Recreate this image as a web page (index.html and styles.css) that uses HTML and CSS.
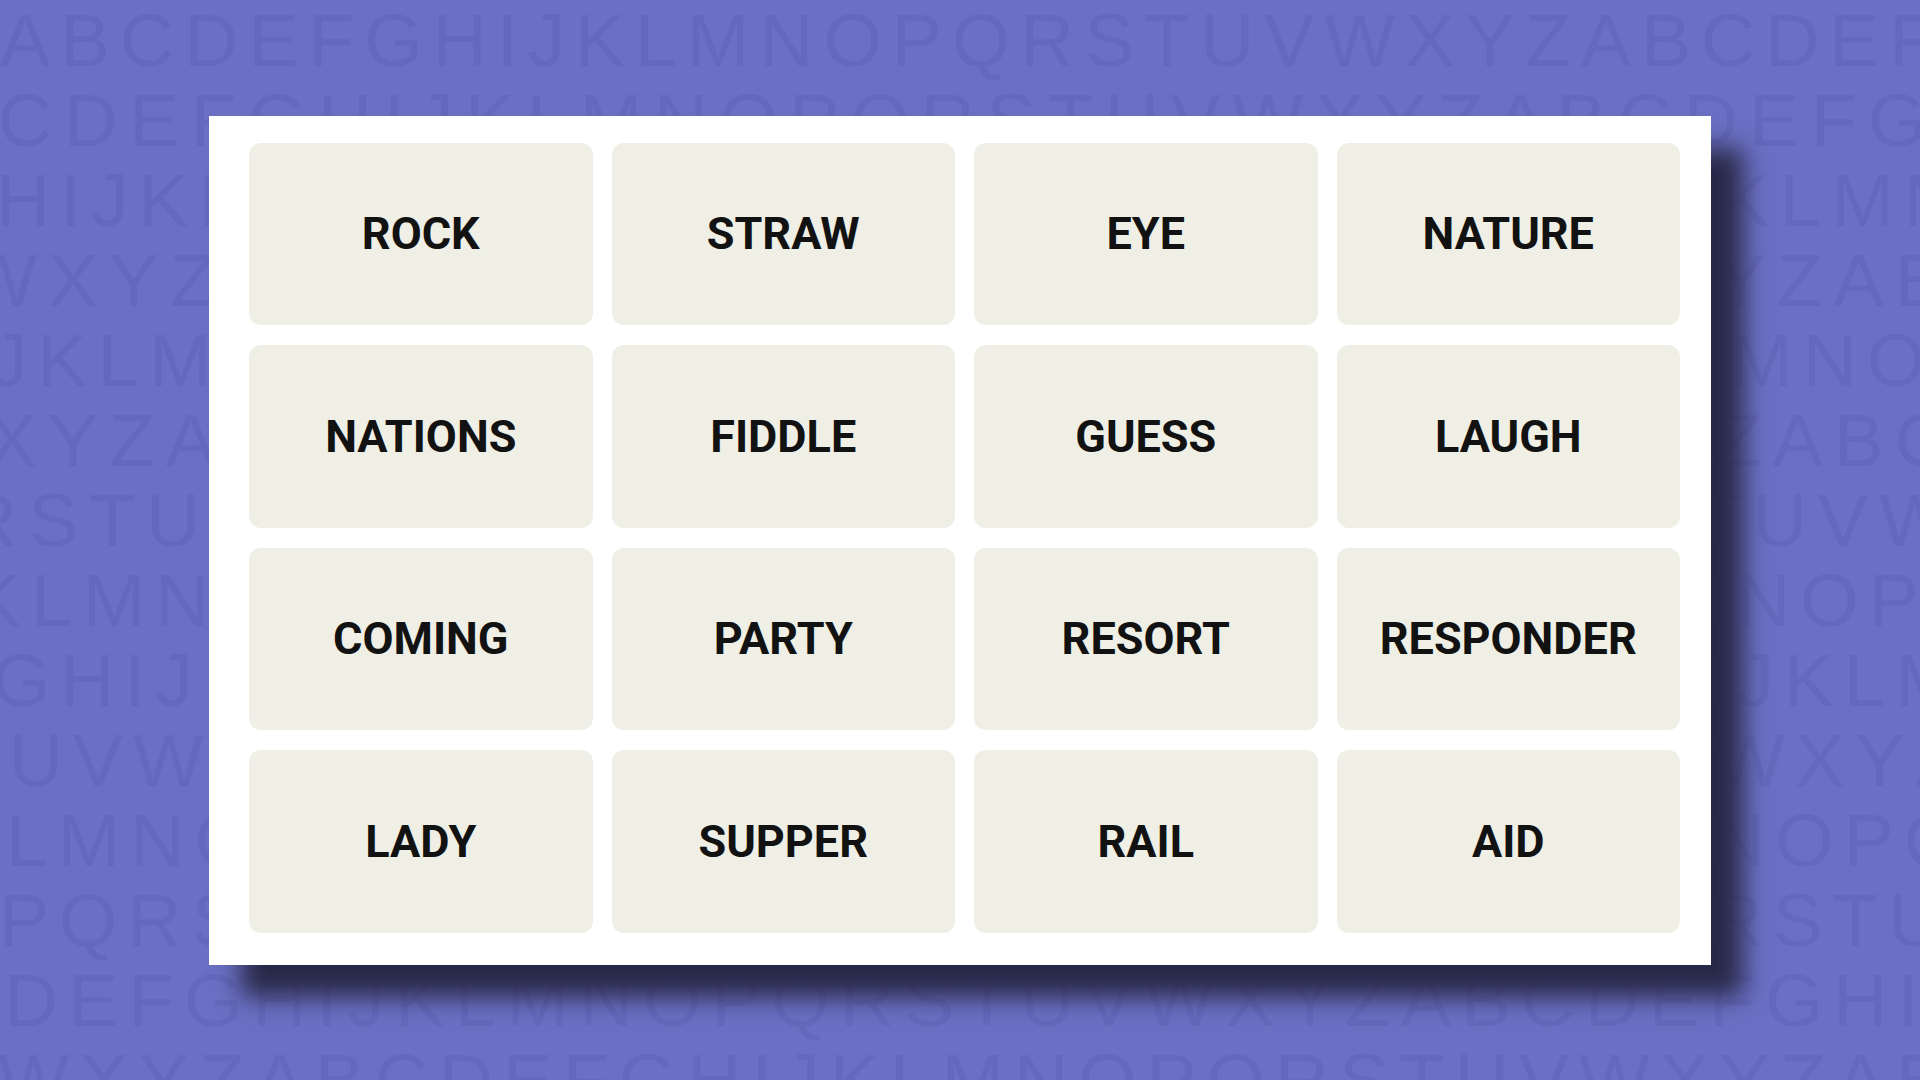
FILE: index.html
```html
<!DOCTYPE html>
<html lang="en">

<head>
    <meta charset="UTF-8">
    <meta name="viewport" content="width=device-width, initial-scale=1.0">
    <title>Connections</title>
    <link rel="stylesheet" href="styles.css">
</head>

<body>
    <div class="scene">
        <!-- alphabet wallpaper behind the board -->
        <div class="letters" aria-hidden="true">
            <div class="row r1">ABCDEFGHIJKLMNOPQRSTUVWXYZABCDEFGHIJ</div>
            <div class="row r2">CDEFGHIJKLMNOPQRSTUVWXYZABCDEFGHIJKL</div>
            <div class="row r3">HIJKLMNOPQRSTUVWXYZABCDEFGHIJKLMNOPQ</div>
            <div class="row r4">WXYZABCDEFGHIJKLMNOPQRSTUVWXYZABCDEF</div>
            <div class="row r5">JKLMNOPQRSTUVWXYZABCDEFGHIJKLMNOPQRS</div>
            <div class="row r6">XYZABCDEFGHIJKLMNOPQRSTUVWXYZABCDEFG</div>
            <div class="row r7">RSTUVWXYZABCDEFGHIJKLMNOPQRSTUVWXYZA</div>
            <div class="row r8">KLMNOPQRSTUVWXYZABCDEFGHIJKLMNOPQRST</div>
            <div class="row r9">GHIJKLMNOPQRSTUVWXYZABCDEFGHIJKLMNOP</div>
            <div class="row r10">TUVWXYZABCDEFGHIJKLMNOPQRSTUVWXYZABC</div>
            <div class="row r11">LMNOPQRSTUVWXYZABCDEFGHIJKLMNOPQRSTU</div>
            <div class="row r12">PQRSTUVWXYZABCDEFGHIJKLMNOPQRSTUVWXY</div>
            <div class="row r13">DEFGHIJKLMNOPQRSTUVWXYZABCDEFGHIJKLM</div>
            <div class="row r14">WXYZABCDEFGHIJKLMNOPQRSTUVWXYZABCDEF</div>
        </div>

        <div class="stage">
            <div class="board">
                <div class="tile">ROCK</div>
                <div class="tile">STRAW</div>
                <div class="tile">EYE</div>
                <div class="tile">NATURE</div>
                <div class="tile">NATIONS</div>
                <div class="tile">FIDDLE</div>
                <div class="tile">GUESS</div>
                <div class="tile">LAUGH</div>
                <div class="tile">COMING</div>
                <div class="tile">PARTY</div>
                <div class="tile">RESORT</div>
                <div class="tile">RESPONDER</div>
                <div class="tile">LADY</div>
                <div class="tile">SUPPER</div>
                <div class="tile">RAIL</div>
                <div class="tile">AID</div>
            </div>
        </div>
    </div>
</body>

</html>
```

FILE: styles.css
```css
* {
    margin: 0;
    padding: 0;
    box-sizing: border-box;
}

body {
    background-color: #6c70c5;
    overflow: hidden;
}

/* wallpaper and board share one grid cell */
.scene {
    display: grid;
    width: 100vw;
    height: 100vh;
    overflow: hidden;
}

.letters,
.stage {
    grid-area: 1 / 1;
}

.letters {
    overflow: hidden;
    font-family: "Liberation Sans", Arial, sans-serif;
    font-size: 75px;
    line-height: 80px;
    letter-spacing: 10px;
    color: #6569bd;
    white-space: nowrap;
}

.row {
    height: 80px;
}

.r1 { margin-left: 0; }
.r2 { margin-left: -2px; letter-spacing: 11.5px; }
.r3 { margin-left: -4px; }
.r4 { margin-left: -34px; letter-spacing: 11px; }
.r5 { margin-left: -10px; }
.r6 { margin-left: -13px; letter-spacing: 11px; }
.r7 { margin-left: -37px; letter-spacing: 11px; }
.r8 { margin-left: -29px; }
.r9 { margin-left: -8px; }
.r10 { margin-left: -47px; }
.r11 { margin-left: 6px; }
.r12 { margin-left: -1px; }
.r13 { margin-left: 4px; }
.r14 { margin-left: -2px; }

.stage {
    display: flex;
    justify-content: center;
    align-items: center;
}

.board {
    width: 1502px;
    height: 849px;
    background-color: #fff;
    padding: 27px 31px 32px 40px;
    display: grid;
    grid-template-columns: repeat(4, 1fr);
    grid-template-rows: repeat(4, 1fr);
    column-gap: 19px;
    row-gap: 20px;
    box-shadow: 32px 32px 24px #282948;
}

.tile {
    background-color: #efefe6;
    border-radius: 12px;
    display: flex;
    justify-content: center;
    align-items: center;
    font-family: Roboto, "Liberation Sans", sans-serif;
    font-weight: 700;
    font-size: 45px;
    color: #121212;
}
```
